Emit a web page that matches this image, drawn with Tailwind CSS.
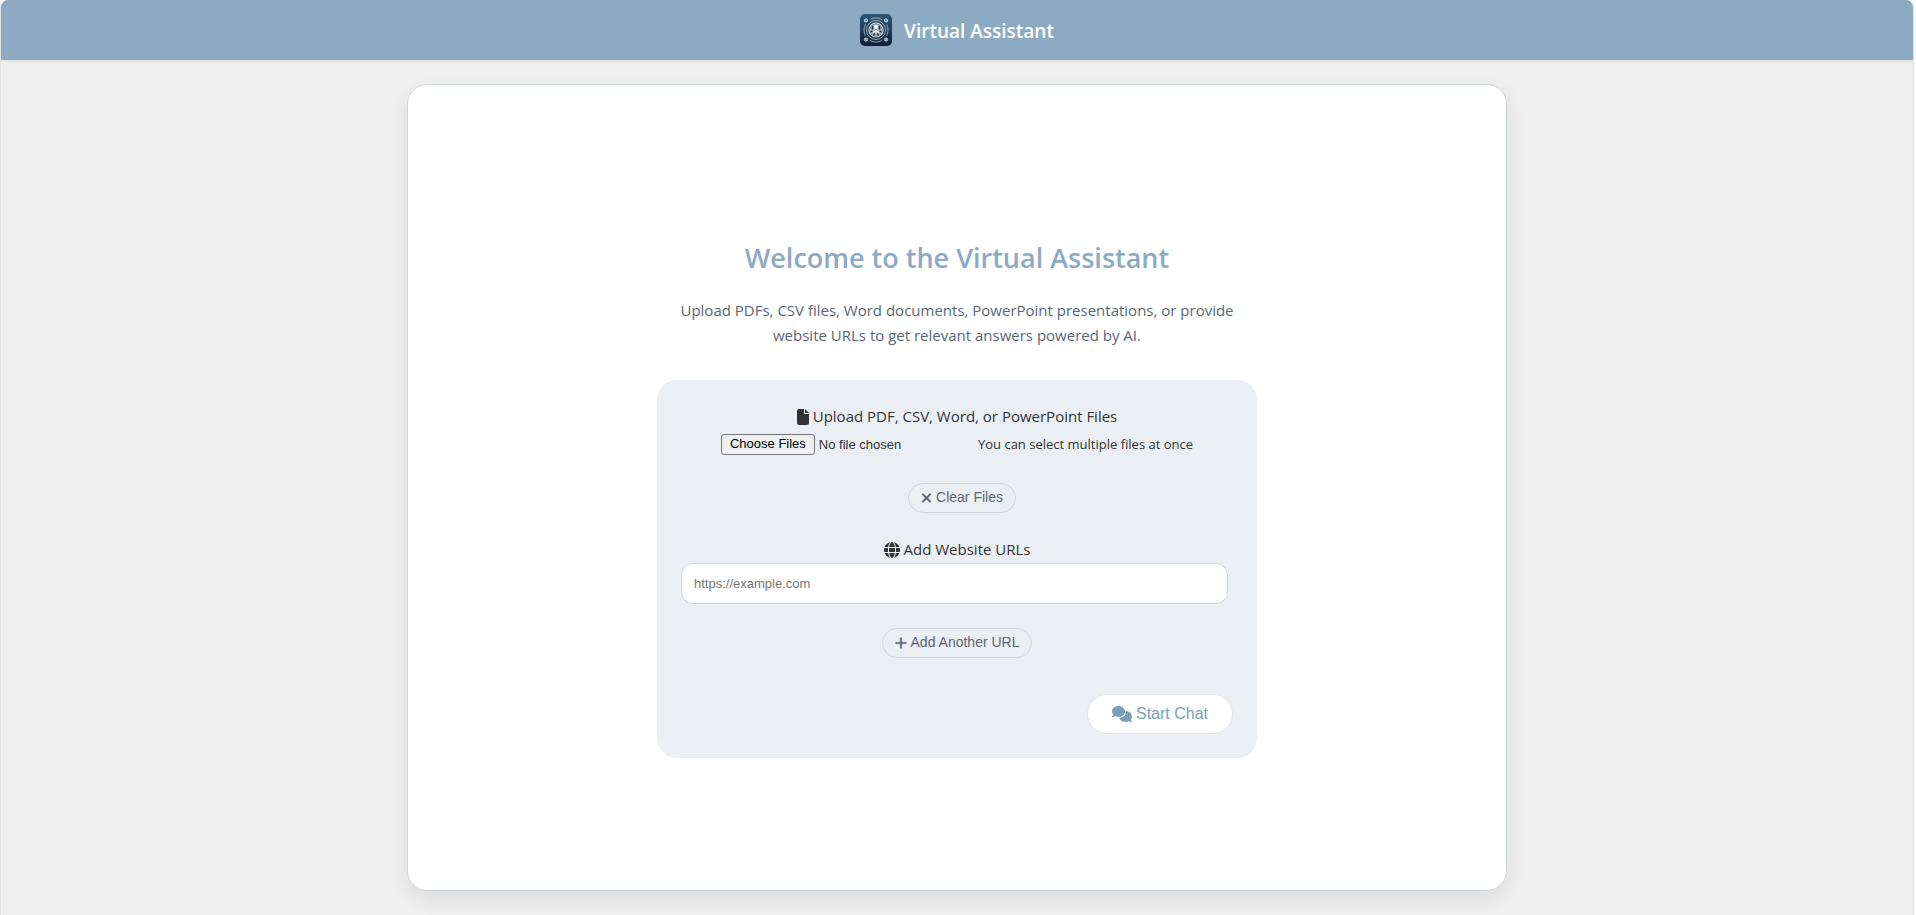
<!DOCTYPE html>
<html lang="en">
<head>
<meta charset="utf-8">
<title>Virtual Assistant</title>
<script src="https://cdn.jsdelivr.net/npm/@tailwindcss/browser@4"></script>
</head>
<body class="min-h-screen bg-[#f8f8f8] pr-[2px] font-['Open_Sans',sans-serif] text-[#333]">
<div class="flex min-h-screen flex-col overflow-hidden rounded-t-lg border-x border-[#e2e2e2] bg-[#efefef]">
  <header class="flex h-[60px] shrink-0 items-center justify-center gap-3 bg-[#8cabc3] shadow-[0_2px_4px_rgba(0,0,0,0.06)]">
    <svg class="size-8" viewBox="0 0 32 32" aria-hidden="true">
      <defs><linearGradient id="g" x1="0" y1="0" x2="0" y2="1"><stop offset="0" stop-color="#2f5878"/><stop offset="1" stop-color="#0d2033"/></linearGradient></defs>
      <rect width="32" height="32" rx="5" fill="url(#g)"/>
      <g fill="none" stroke="#b9cad6">
        <circle cx="16" cy="16" r="12" stroke-width="1" stroke-dasharray="12 6.850" stroke-dashoffset="6" opacity=".75"/>
        <circle cx="16" cy="16" r="9.500" stroke-width="1" opacity=".8"/>
        <circle cx="16" cy="16" r="7" stroke-width="1.200" stroke="#dfe8ee"/>
      </g>
      <g fill="#7f99ab" stroke="#cbd8e1" stroke-width="1">
        <circle cx="6" cy="6.500" r="1.600"/><circle cx="26" cy="6.500" r="1.600"/><circle cx="6" cy="25.500" r="1.600"/><circle cx="26" cy="25.500" r="1.600"/>
      </g>
      <circle cx="16" cy="16" r="6" fill="#a9bac6"/>
      <path d="M12.500 12v3.500M19.500 12v3.500M14 19v2.500M18 19v2.500M16 15.500v2M10.500 17.500h2M19.500 17.500h2" stroke="#14293c" stroke-width="1.500"/>
      <circle cx="16" cy="13" r="2" fill="#fff"/>
      <path d="M13 19l3-2.500 3 2.500" fill="none" stroke="#fff" stroke-width="1.300"/>
    </svg>
    <h1 class="pt-[2px] text-[19px] font-semibold leading-6 text-white">Virtual Assistant</h1>
  </header>

  <main class="mx-auto my-6 flex w-full max-w-[1100px] grow flex-col items-center justify-center rounded-[20px] border border-[#d0d7de] bg-white px-5 pt-5 shadow-[0_8px_20px_rgba(0,0,0,0.08)]">
    <h2 class="text-[27px] font-semibold leading-10 text-[#8babc3]">Welcome to the Virtual Assistant</h2>
    <p class="mt-5 max-w-[600px] text-center text-[15px] leading-[25px] text-[#5a6778]">Upload PDFs, CSV files, Word documents, PowerPoint presentations, or provide website URLs to get relevant answers powered by AI.</p>

    <form class="mt-8 flex w-full max-w-[600px] flex-col rounded-[20px] bg-[#ebeff4] p-6">
      <label for="files" class="flex h-[26px] items-center justify-center gap-1 text-[15px]">
        <svg class="h-4 w-3" viewBox="0 0 384 512" fill="#333" aria-hidden="true"><path d="M0 64C0 28.700 28.700 0 64 0H224V128c0 17.700 14.300 32 32 32H384V448c0 35.300-28.700 64-64 64H64c-35.300 0-64-28.700-64-64V64zm384 64H256V0L384 128z"/></svg>
        Upload PDF, CSV, Word, or PowerPoint Files
      </label>
      <div class="mt-1 flex items-center justify-center gap-1">
        <input id="files" type="file" multiple class="w-[253px] font-['Liberation_Sans',Arial,sans-serif] text-[13px] leading-4 file:mr-1 file:h-[21px] file:rounded-[3px] file:border file:border-solid file:border-[#767676] file:bg-[#efefef] file:px-2 file:text-black">
        <small class="text-[13px] leading-4">You can select multiple files at once</small>
      </div>
      <button type="button" class="ml-[10px] mt-7 flex h-[30px] items-center gap-1 self-center rounded-full border border-[#d0d7de] px-3 font-['Liberation_Sans',Arial,sans-serif] text-[14px] text-[#5a6778]">
        <svg class="h-[14px] w-[11px]" viewBox="0 0 384 512" fill="currentColor" stroke="currentColor" stroke-width="14" aria-hidden="true"><path d="M342.600 150.600c12.500-12.500 12.500-32.800 0-45.300s-32.800-12.500-45.300 0L192 210.700 86.600 105.400c-12.500-12.500-32.800-12.500-45.300 0s-12.500 32.800 0 45.300L146.700 256 41.400 361.400c-12.500 12.500-12.500 32.800 0 45.300s32.800 12.500 45.300 0L192 301.300 297.400 406.600c12.500 12.500 32.800 12.500 45.300 0s12.500-32.800 0-45.300L237.300 256 342.600 150.600z"/></svg>
        Clear Files
      </button>
      <label for="url" class="mt-6 flex h-[26px] items-center justify-center gap-1 text-[15px]">
        <svg class="size-4" viewBox="0 0 512 512" fill="#333" aria-hidden="true"><path d="M352 256c0 22.200-1.200 43.600-3.300 64H163.300c-2.200-20.400-3.300-41.800-3.300-64s1.200-43.600 3.300-64H348.700c2.200 20.400 3.300 41.800 3.300 64zm28.800-64H503.900c5.300 20.500 8.100 41.900 8.100 64s-2.800 43.500-8.100 64H380.800c2.100-20.600 3.200-42 3.200-64s-1.100-43.400-3.200-64zm112.600-32H376.700c-10-63.900-29.800-117.400-55.300-151.600c78.300 20.700 142 77.500 171.900 151.600zm-149.100 0H167.700c6.100-36.400 15.500-68.600 27-94.700c10.500-23.600 22.200-40.700 33.500-51.500C239.400 3.200 248.700 0 256 0s16.600 3.200 27.800 13.800c11.300 10.800 23 27.900 33.500 51.500c11.600 26 20.900 58.200 27 94.700zm-209 0H18.600C48.600 85.900 112.200 29.100 190.600 8.400C165.100 42.600 145.300 96.100 135.300 160zM8.100 192H131.200c-2.100 20.600-3.200 42-3.200 64s1.100 43.400 3.200 64H8.100C2.800 299.500 0 278.100 0 256s2.800-43.500 8.100-64zM194.700 446.600c-11.600-26-20.900-58.200-27-94.600H344.300c-6.100 36.400-15.500 68.600-27 94.600c-10.500 23.600-22.200 40.700-33.500 51.500C272.600 508.800 263.300 512 256 512s-16.600-3.200-27.800-13.800c-11.300-10.800-23-27.900-33.500-51.500zM135.300 352c10 63.900 29.800 117.400 55.300 151.600C112.200 482.900 48.600 426.100 18.600 352H135.300zm358.100 0c-30 74.100-93.600 130.900-171.900 151.600c25.500-34.200 45.200-87.700 55.300-151.600H493.400z"/></svg>
        Add Website URLs
      </label>
      <input id="url" type="url" placeholder="https://example.com" class="mr-[5px] h-[41px] rounded-xl border border-[#d0d7de] bg-white px-3 font-['Liberation_Sans',Arial,sans-serif] text-[13px] placeholder:text-[#757575]">
      <button type="button" class="mt-6 flex h-[30px] items-center gap-1 self-center rounded-full border border-[#d0d7de] px-3 font-['Liberation_Sans',Arial,sans-serif] text-[14px] text-[#5a6778]">
        <svg class="h-[14px] w-[12px]" viewBox="0 0 448 512" fill="currentColor" stroke="currentColor" stroke-width="10" aria-hidden="true"><path d="M256 80c0-17.700-14.300-32-32-32s-32 14.300-32 32V224H48c-17.700 0-32 14.300-32 32s14.300 32 32 32H192V432c0 17.700 14.300 32 32 32s32-14.300 32-32V288H400c17.700 0 32-14.300 32-32s-14.300-32-32-32H256V80z"/></svg>
        Add Another URL
      </button>
      <button type="submit" class="mt-9 flex h-10 items-center gap-1 self-end rounded-full border border-[#e2e6ea] bg-white px-6 font-['Liberation_Sans',Arial,sans-serif] text-[16px] text-[#7a9eb8]">
        <svg class="h-4 w-5" viewBox="0 0 640 512" fill="currentColor" aria-hidden="true"><path d="M208 352c114.900 0 208-78.800 208-176S322.900 0 208 0S0 78.800 0 176c0 38.600 14.700 74.300 39.600 103.400c-3.500 9.400-8.700 17.700-14.200 24.700c-4.800 6.200-9.700 11-13.300 14.300c-1.800 1.600-3.300 2.900-4.300 3.700c-.5 .4-.9 .7-1.100 .8l-.2 .2C1 327.200-1.400 334.400 .8 340.900S9.100 352 16 352c21.800 0 43.800-5.600 62.100-12.500c9.200-3.500 17.800-7.400 25.200-11.400C134.100 343.300 169.800 352 208 352zM448 176c0 112.300-99.100 196.900-216.500 207C255.800 457.400 336.400 512 432 512c38.200 0 73.900-8.700 104.700-23.900c7.500 4 16 7.900 25.200 11.400c18.300 6.900 40.300 12.500 62.100 12.500c6.900 0 13.100-4.500 15.200-11.100c2.100-6.600-.2-13.800-5.800-17.900l-.2-.2c-.2-.2-.6-.4-1.100-.8c-1-.8-2.500-2-4.300-3.700c-3.600-3.300-8.500-8.100-13.300-14.300c-5.500-7-10.700-15.400-14.200-24.700c24.900-29 39.600-64.700 39.600-103.400c0-92.800-84.900-168.900-192.600-175.500c.4 5.100 .6 10.300 .6 15.500z"/></svg>
        Start Chat
      </button>
    </form>
  </main>
</div>
</body>
</html>
